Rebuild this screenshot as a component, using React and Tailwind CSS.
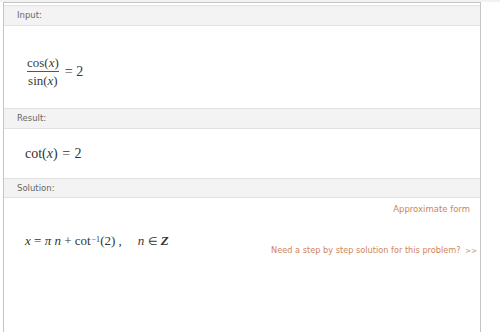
import React from "react";

const ui = { fontFamily: '"DejaVu Sans", Verdana, sans-serif' };
const math = { fontFamily: '"Liberation Serif", "Times New Roman", serif' };

function Header({ children, h = "h-[21px]" }) {
  return (
    <div
      className={`${h} flex items-center bg-[#f3f3f3] border-t border-b border-[#e2e2e2] pl-[13px] text-[8.5px] text-[#666]`}
      style={ui}
    >
      {children}
    </div>
  );
}

export default function App() {
  return (
    <div className="w-[500px] h-[332px] bg-white overflow-hidden">
      <div className="h-[2px] bg-[#f2f2f2]" />
      <div className="ml-[3px] w-[478px] h-[330px] border-t border-l border-r border-[#c4c4c4] pt-[2px] flex flex-col">
        <Header>Input:</Header>
        <div className="h-[82px] flex items-center pl-[23px] pt-[9px] text-[#3a3a3a]" style={math}>
          <div className="inline-flex flex-col items-center text-[13px] leading-[17px]">
            <span>
              cos(<i>x</i>)
            </span>
            <span className="w-full h-px bg-[#555]" />
            <span>
              sin(<i>x</i>)
            </span>
          </div>
          <span className="ml-[6px] text-[14px]" style={math}>= 2</span>
        </div>
        <Header>Result:</Header>
        <div className="h-[49px] flex items-center pl-[21px] text-[14px] text-[#333]" style={math}>
          <span>
            cot(<i>x</i>) <span className="mx-[1px]">=</span> 2
          </span>
        </div>
        <Header h="h-[20px]">Solution:</Header>
        <div className="flex-1 flex flex-col">
          <div className="flex justify-end pr-[10px] pt-[5px] text-[8.5px] text-[#d1845a]" style={ui}>
            Approximate form
          </div>
          <div className="flex justify-between mt-[16px]">
            <div className="pl-[21px] text-[13px] text-[#333] leading-[17px] whitespace-nowrap" style={math}>
              <i>x</i> = <i>π</i> <i>n</i> + cot<sup className="text-[8px] relative -top-[3px] ml-[1px]">−1</sup>(2) ,
              <span className="ml-[16px]">
                <i>n</i> <span className="text-[11px]">∈</span> <b>
                  <i>Z</i>
                </b>
              </span>
            </div>
            <div className="pr-[3px] mt-[12px] text-[8.2px] text-[#d1845a] whitespace-nowrap" style={ui}>
              Need a step by step solution for this problem? <span className="ml-[2px] text-[7px]">&gt;&gt;</span>
            </div>
          </div>
        </div>
      </div>
    </div>
  );
}
